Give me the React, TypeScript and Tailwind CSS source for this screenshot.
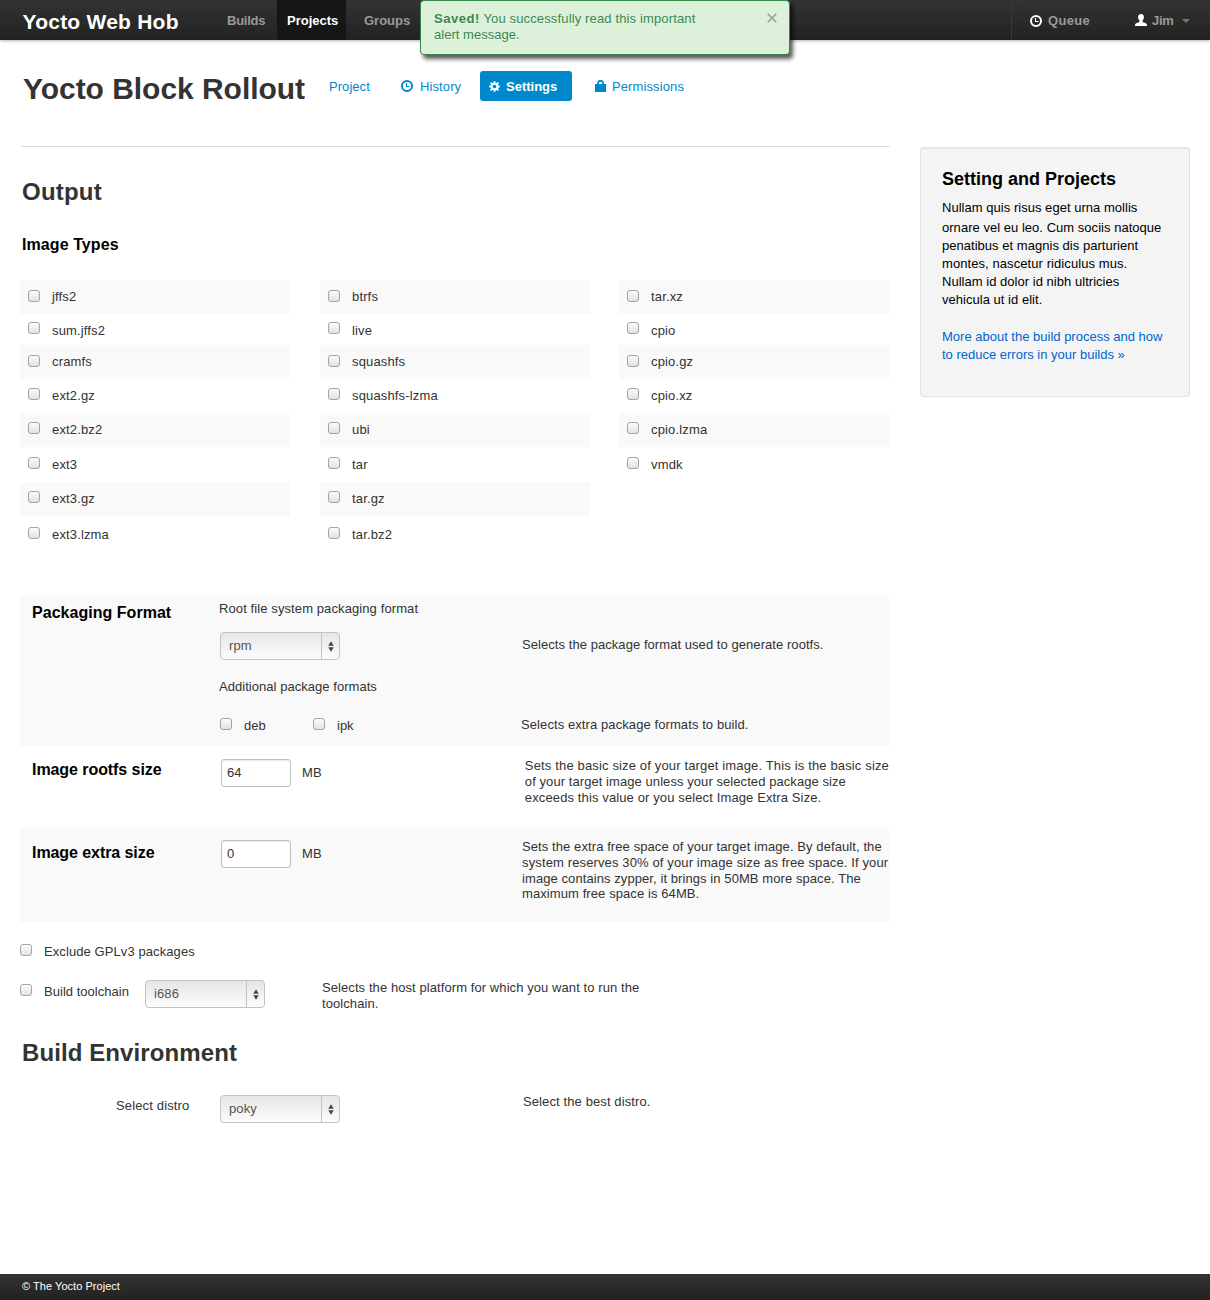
import type { ReactNode } from "react";

function Clock({ className = "" }: { className?: string }) {
  return (
    <svg width="12" height="12" viewBox="0 0 12 12" fill="none" stroke="currentColor" className={className}>
      <circle cx="6" cy="6" r="5" strokeWidth="2" />
      <path d="M5.5 3v3.5H8.5" strokeWidth="1.1" />
    </svg>
  );
}

function Gear() {
  return (
    <svg width="11" height="11" viewBox="0 0 11 11">
      <g fill="none" stroke="white">
        <circle cx="5.5" cy="5.5" r="2.9" strokeWidth="2.1" />
        <path d="M5.5 0.2v2M5.5 8.8v2M0.2 5.5h2M8.8 5.5h2M1.6 1.6l1.5 1.5M7.9 7.9l1.5 1.5M9.4 1.6L7.9 3.1M3.1 7.9L1.6 9.4" strokeWidth="1.9" />
      </g>
    </svg>
  );
}

function Lock() {
  return (
    <svg width="11" height="12" viewBox="0 0 11 12">
      <path d="M2.9 5.500V3.400a2.600 2.600 0 0 1 5.200 0v2.100" fill="none" stroke="currentColor" strokeWidth="1.8" />
      <rect x="0" y="4" width="11" height="8" fill="currentColor" />
    </svg>
  );
}

function User() {
  return (
    <svg width="12" height="12" viewBox="0 0 12 12" fill="white">
      <path d="M6 0C4.200 0 3.100 1.200 3.100 3c0 1.500.5 2.800 1.300 3.500V8L1.200 9.300C.4 9.600 0 10.200 0 11v1h12v-1c0-.8-.4-1.400-1.200-1.700L7.600 8V6.500C8.400 5.800 8.900 4.500 8.900 3 8.900 1.200 7.800 0 6 0z" />
    </svg>
  );
}

function Checkbox({ className = "" }: { className?: string }) {
  return (
    <span
      className={`block h-3 w-3 shrink-0 rounded-[3px] border border-[#a3a3a3] bg-linear-to-b from-[#fbfbfb] to-[#e2e2e2] ${className}`}
    />
  );
}

function Select({ value, className = "" }: { value: string; className?: string }) {
  return (
    <div
      className={`flex h-7 w-[120px] shrink-0 rounded-[4px] border border-[#c3c3c3] bg-linear-to-b from-[#e6e6e6] to-[#fcfcfc] text-[#555] ${className}`}
    >
      <span className="flex-1 pl-2 pt-[5px]">{value}</span>
      <span className="flex w-[18px] items-center border-l border-[#c3c3c3] pl-[5.5px]">
        <svg width="6" height="11" viewBox="0 0 6 11" fill="#444">
          <path d="M3 .3L5.700 4.800H.3zM3 10.700L.3 6.200H5.700z" />
        </svg>
      </span>
    </div>
  );
}

function SizeInput({ value }: { value: string }) {
  return (
    <div className="h-7 w-[70px] shrink-0 rounded-[3px] border border-[#bfbfbf] bg-white pl-[5px] pt-[5px] shadow-[inset_0_1px_1px_rgba(0,0,0,0.08)]">
      {value}
    </div>
  );
}

const rowStyles = [
  { row: "h-[34px] bg-[#f9f9f9]", box: "mt-2.5", label: "mt-[9px]" },
  { row: "h-[31px]", box: "mt-2", label: "mt-[9px]" },
  { row: "h-[34px] bg-[#f9f9f9]", box: "mt-2.5", label: "mt-[9px]" },
  { row: "h-[34px]", box: "mt-[9px]", label: "mt-[9px]" },
  { row: "h-[34px] bg-[#f9f9f9]", box: "mt-[9px]", label: "mt-[9px]" },
  { row: "h-[35px]", box: "mt-2.5", label: "mt-2.5" },
  { row: "h-[34px] bg-[#f9f9f9]", box: "mt-[9px]", label: "mt-[9px]" },
  { row: "h-[34px]", box: "mt-[11px]", label: "mt-[11px]" },
];

const imageTypes = [
  ["jffs2", "sum.jffs2", "cramfs", "ext2.gz", "ext2.bz2", "ext3", "ext3.gz", "ext3.lzma"],
  ["btrfs", "live", "squashfs", "squashfs-lzma", "ubi", "tar", "tar.gz", "tar.bz2"],
  ["tar.xz", "cpio", "cpio.gz", "cpio.xz", "cpio.lzma", "vmdk"],
];

function TypeColumn({ items }: { items: string[] }) {
  return (
    <div className="w-[270px]">
      {items.map((name, i) => (
        <div key={name} className={`flex pl-2 tracking-[0.15px] ${rowStyles[i].row}`}>
          <Checkbox className={rowStyles[i].box} />
          <span className={`ml-3 ${rowStyles[i].label}`}>{name}</span>
        </div>
      ))}
    </div>
  );
}

function Section({ title, className, titleClass, children }: { title: string; className: string; titleClass: string; children: ReactNode }) {
  return (
    <section className={`flex w-[869px] pl-3 ${className}`}>
      <h3 className={`w-[187px] shrink-0 text-base leading-5 font-bold text-black ${titleClass}`}>{title}</h3>
      {children}
    </section>
  );
}

export default function App() {
  return (
    <div className="flex h-[1300px] w-[1210px] flex-col bg-white font-['Liberation_Sans',Arial,sans-serif] text-[13px] leading-4 tracking-[0.11px] whitespace-nowrap text-[#333]">
      <header className="relative flex h-10 shrink-0 bg-linear-to-b from-[#333] to-[#222] text-[#999] shadow-[0_1px_3px_rgba(0,0,0,0.3)]">
        <div className="w-[227px] pt-[10px] pl-[22.5px] text-[21px] leading-6 font-bold tracking-[0.23px] text-white">Yocto Web Hob</div>
        <nav className="flex h-10 pt-[13px] font-bold tracking-normal">
          <a className="w-[50px] tracking-[-0.25px]">Builds</a>
          <a className="-mt-[13px] h-10 w-[69px] bg-[#161616] pt-[13px] pl-[10px] text-white">Projects</a>
          <a className="pl-[18px]">Groups</a>
        </nav>
        <div className="ml-auto flex h-10 w-[199px] border-l border-[#383838] pt-[13px] pl-[18px] font-bold">
          <Clock className="mt-0.5 text-white" />
          <span className="ml-1.5 tracking-[0.3px]">Queue</span>
          <span className="mt-[1px] ml-[45px]"><User /></span>
          <span className="ml-[5px] tracking-[-0.3px]">Jim</span>
          <svg className="mt-[6px] ml-[9px]" width="8" height="4" viewBox="0 0 8 4" fill="#777"><path d="M0 0h8L4 4z" /></svg>
        </div>
        <div className="absolute top-0 left-[420px] flex h-[55px] w-[370px] justify-between rounded-[4px] border border-[#35884a] bg-[#ddf0da] pt-[10px] pl-[13px] text-[#35884a] shadow-[3px_4px_4px_rgba(0,0,0,0.65)]">
          <div className="tracking-[0.14px] [text-shadow:0_1px_0_rgba(255,255,255,0.5)]">
            <p className="leading-[15px]"><strong className="tracking-[0.55px]">Saved!</strong> You successfully read this important</p>
            <p className="leading-[17px] tracking-[0.03px]">alert message.</p>
          </div>
          <svg className="mt-[2px] mr-[12.5px]" width="10" height="10" viewBox="0 0 10 10" stroke="#999" strokeWidth="1.5">
            <path d="M.7.7l8.600 8.600M9.300.7L.7 9.300" />
          </svg>
        </div>
      </header>

      <div className="flex h-[106px] shrink-0 pl-[23px] pt-[31px] text-[#0088cc]">
        <h1 className="mt-[2px] w-[306px] text-[30px] leading-8 font-bold tracking-[-0.04px] text-[#333]">Yocto Block Rollout</h1>
        <nav className="flex h-[30px] items-start">
          <a className="w-[72px] pt-2 tracking-[0.05px]">Project</a>
          <a className="flex w-[79px] pt-2"><Clock className="mt-[1px] mr-[7px]" />History</a>
          <a className="flex h-[30px] w-[92px] rounded-[3px] bg-[#0088cc] pt-2 pl-[9px] font-bold tracking-normal text-white">
            <span className="mt-[2px] mr-[6px]"><Gear /></span>Settings
          </a>
          <a className="flex pt-2 pl-[23px]"><span className="mt-[1px] mr-[6px]"><Lock /></span>Permissions</a>
        </nav>
      </div>

      <div className="flex flex-1 pl-5">
        <main className="w-[870px] shrink-0">
          <div className="ml-px border-t border-[#ddd]" />
          <h2 className="mt-[31px] ml-[2px] text-2xl leading-7 font-bold tracking-[0.22px]">Output</h2>
          <h3 className="mt-[29px] ml-[2px] text-base leading-5 font-bold tracking-[0.08px] text-black">Image Types</h3>
          <div className="mt-[25px] flex h-[315px]">
            <TypeColumn items={imageTypes[0]} />
            <div className="ml-[30px]"><TypeColumn items={imageTypes[1]} /></div>
            <div className="ml-[29px]"><TypeColumn items={imageTypes[2]} /></div>
          </div>

          <Section title="Packaging Format" className="h-[151px] bg-[#f9f9f9]" titleClass="mt-2 tracking-[0.03px]">
            <div className="w-[303px] pt-[6px]">
              <p className="tracking-[0.1px]">Root file system packaging format</p>
              <Select value="rpm" className="mt-[15px] ml-px" />
              <p className="mt-[19px] tracking-[0.04px]">Additional package formats</p>
              <div className="mt-[23px] flex pl-px tracking-normal">
                <Checkbox />
                <span className="ml-3 w-[69px]">deb</span>
                <Checkbox />
                <span className="ml-3">ipk</span>
              </div>
            </div>
            <div className="pt-[42px] tracking-[0.06px]">
              <p>Selects the package format used to generate rootfs.</p>
              <p className="mt-16 -ml-px tracking-[0.09px]">Selects extra package formats to build.</p>
            </div>
          </Section>

          <Section title="Image rootfs size" className="h-[81px]" titleClass="mt-[14px] tracking-[-0.07px]">
            <div className="flex w-[306px] pt-[13px] pl-[2px]">
              <SizeInput value="64" />
              <span className="mt-[6px] ml-[11px]">MB</span>
            </div>
            <p className="pt-3 tracking-[0.15px]">
              Sets the basic size of your target image. This is the basic size
              <br /><span className="tracking-[0.07px]">of your target image unless your selected package size</span>
              <br /><span className="tracking-[0.12px]">exceeds this value or you select Image Extra Size.</span>
            </p>
          </Section>

          <Section title="Image extra size" className="h-[95px] bg-[#f9f9f9]" titleClass="mt-4 tracking-[-0.07px]">
            <div className="flex w-[303px] pt-[13px] pl-[2px]">
              <SizeInput value="0" />
              <span className="mt-[6px] ml-[11px]">MB</span>
            </div>
            <p className="pt-3 leading-[15.75px]">
              <span className="tracking-[0.09px]">Sets the extra free space of your target image. By default, the</span>
              <br /><span className="tracking-[0.13px]">system reserves 30% of your image size as free space. If your</span>
              <br /><span className="tracking-[0.08px]">image contains zypper, it brings in 50MB more space. The</span>
              <br /><span className="tracking-[0.09px]">maximum free space is 64MB.</span>
            </p>
          </Section>

          <div className="mt-[22px] flex">
            <Checkbox />
            <span className="ml-3 tracking-[0.09px]">Exclude GPLv3 packages</span>
          </div>
          <div className="mt-5 flex">
            <Checkbox className="mt-1" />
            <span className="mt-1 ml-3 w-[101px] tracking-[0.03px]">Build toolchain</span>
            <Select value="i686" />
            <p className="ml-[57px] tracking-[0.08px]">
              Selects the host platform for which you want to run the
              <br />toolchain.
            </p>
          </div>

          <h2 className="mt-[27px] ml-[2px] text-2xl leading-7 font-bold tracking-[0.1px]">Build Environment</h2>
          <div className="mt-[28px] flex">
            <span className="mt-[3px] ml-24 w-[104px] tracking-[0.15px]">Select distro</span>
            <Select value="poky" />
            <span className="-mt-px ml-[183px]">Select the best distro.</span>
          </div>
        </main>

        <aside className="mt-px ml-[30px] h-[250px] w-[270px] rounded-[3px] border border-[#e3e3e3] bg-[#f4f4f4] pt-5 pl-[21px] leading-[18px] tracking-[0.03px] text-black shadow-[inset_0_1px_2px_rgba(0,0,0,0.06)]">
          <h3 className="text-lg leading-[22px] font-bold tracking-normal">Setting and Projects</h3>
          <p className="mt-[9px] mb-px">Nullam quis risus eget urna mollis</p>
          <p className="mt-[2px]">
            ornare vel eu leo. Cum sociis natoque
            <br />penatibus et magnis dis parturient
            <br /><span className="tracking-[0.08px]">montes, nascetur ridiculus mus.</span>
            <br />Nullam id dolor id nibh ultricies
            <br />vehicula ut id elit.
          </p>
          <p className="mt-[19px] tracking-normal text-[#0064cd]">
            More about the build process and how
            <br />to reduce errors in your builds »
          </p>
        </aside>
      </div>

      <footer className="h-[26px] shrink-0 bg-linear-to-b from-[#333] to-[#222] pt-1 pl-[22px] text-[11px] tracking-[0.04px] text-white">
        © The Yocto Project
      </footer>
    </div>
  );
}
